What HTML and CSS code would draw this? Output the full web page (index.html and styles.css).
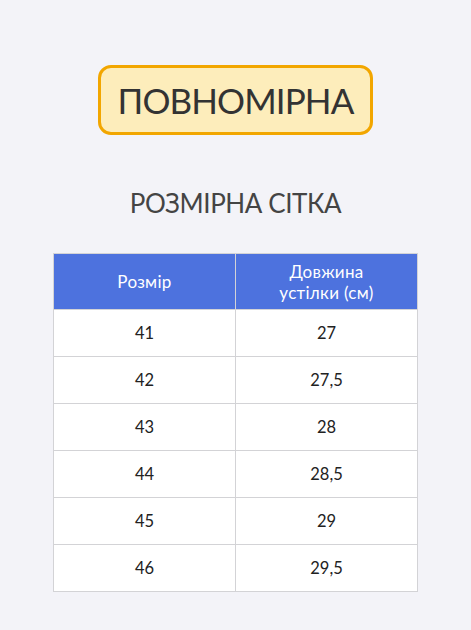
FILE: index.html
```html
<!DOCTYPE html>
<html lang="uk">
<head>
<meta charset="utf-8">
<link rel="stylesheet" href="styles.css">
</head>
<body>
<main class="page">
  <div class="badge">ПОВНОМІРНА</div>
  <h1 class="title">РОЗМІРНА СІТКА</h1>
  <table class="grid">
    <thead>
      <tr><th>Розмір</th><th>Довжина<br>устілки (см)</th></tr>
    </thead>
    <tbody>
      <tr><td>41</td><td>27</td></tr>
      <tr><td>42</td><td>27,5</td></tr>
      <tr><td>43</td><td>28</td></tr>
      <tr><td>44</td><td>28,5</td></tr>
      <tr><td>45</td><td>29</td></tr>
      <tr><td>46</td><td>29,5</td></tr>
    </tbody>
  </table>
</main>
</body>
</html>
```
FILE: styles.css
```css
html, body {
  margin: 0;
  padding: 0;
  background: #f3f3f8;
}
body {
  font-family: "Lato", "Open Sans", sans-serif;
  color: #2f2f2f;
}
.page {
  display: flex;
  flex-direction: column;
  align-items: center;
  padding-top: 65px;
}
.badge {
  box-sizing: border-box;
  width: 275px;
  height: 70px;
  border: 3px solid #f2a600;
  border-radius: 13px;
  background: #fdedbb;
  display: flex;
  align-items: center;
  justify-content: center;
  font-size: 35px;
  letter-spacing: -0.9px;
  color: #333;
}
.title {
  margin: 52px 0 0;
  font-weight: 400;
  font-size: 26px;
  line-height: 32px;
  color: #444;
  letter-spacing: -0.4px;
}
.grid {
  margin-top: 34px;
  width: 365px;
  border-collapse: collapse;
  table-layout: fixed;
  background: #fff;
}
.grid th, .grid td {
  border: 1.5px solid #d3d3d6;
  text-align: center;
  padding: 0;
}
.grid th {
  background: #4d72de;
  color: #fff;
  font-weight: 400;
  font-size: 17px;
  line-height: 21px;
  letter-spacing: 0.3px;
  height: 55px;
}
.grid td {
  height: 46px;
  font-size: 16.5px;
  color: #222;
}
```
